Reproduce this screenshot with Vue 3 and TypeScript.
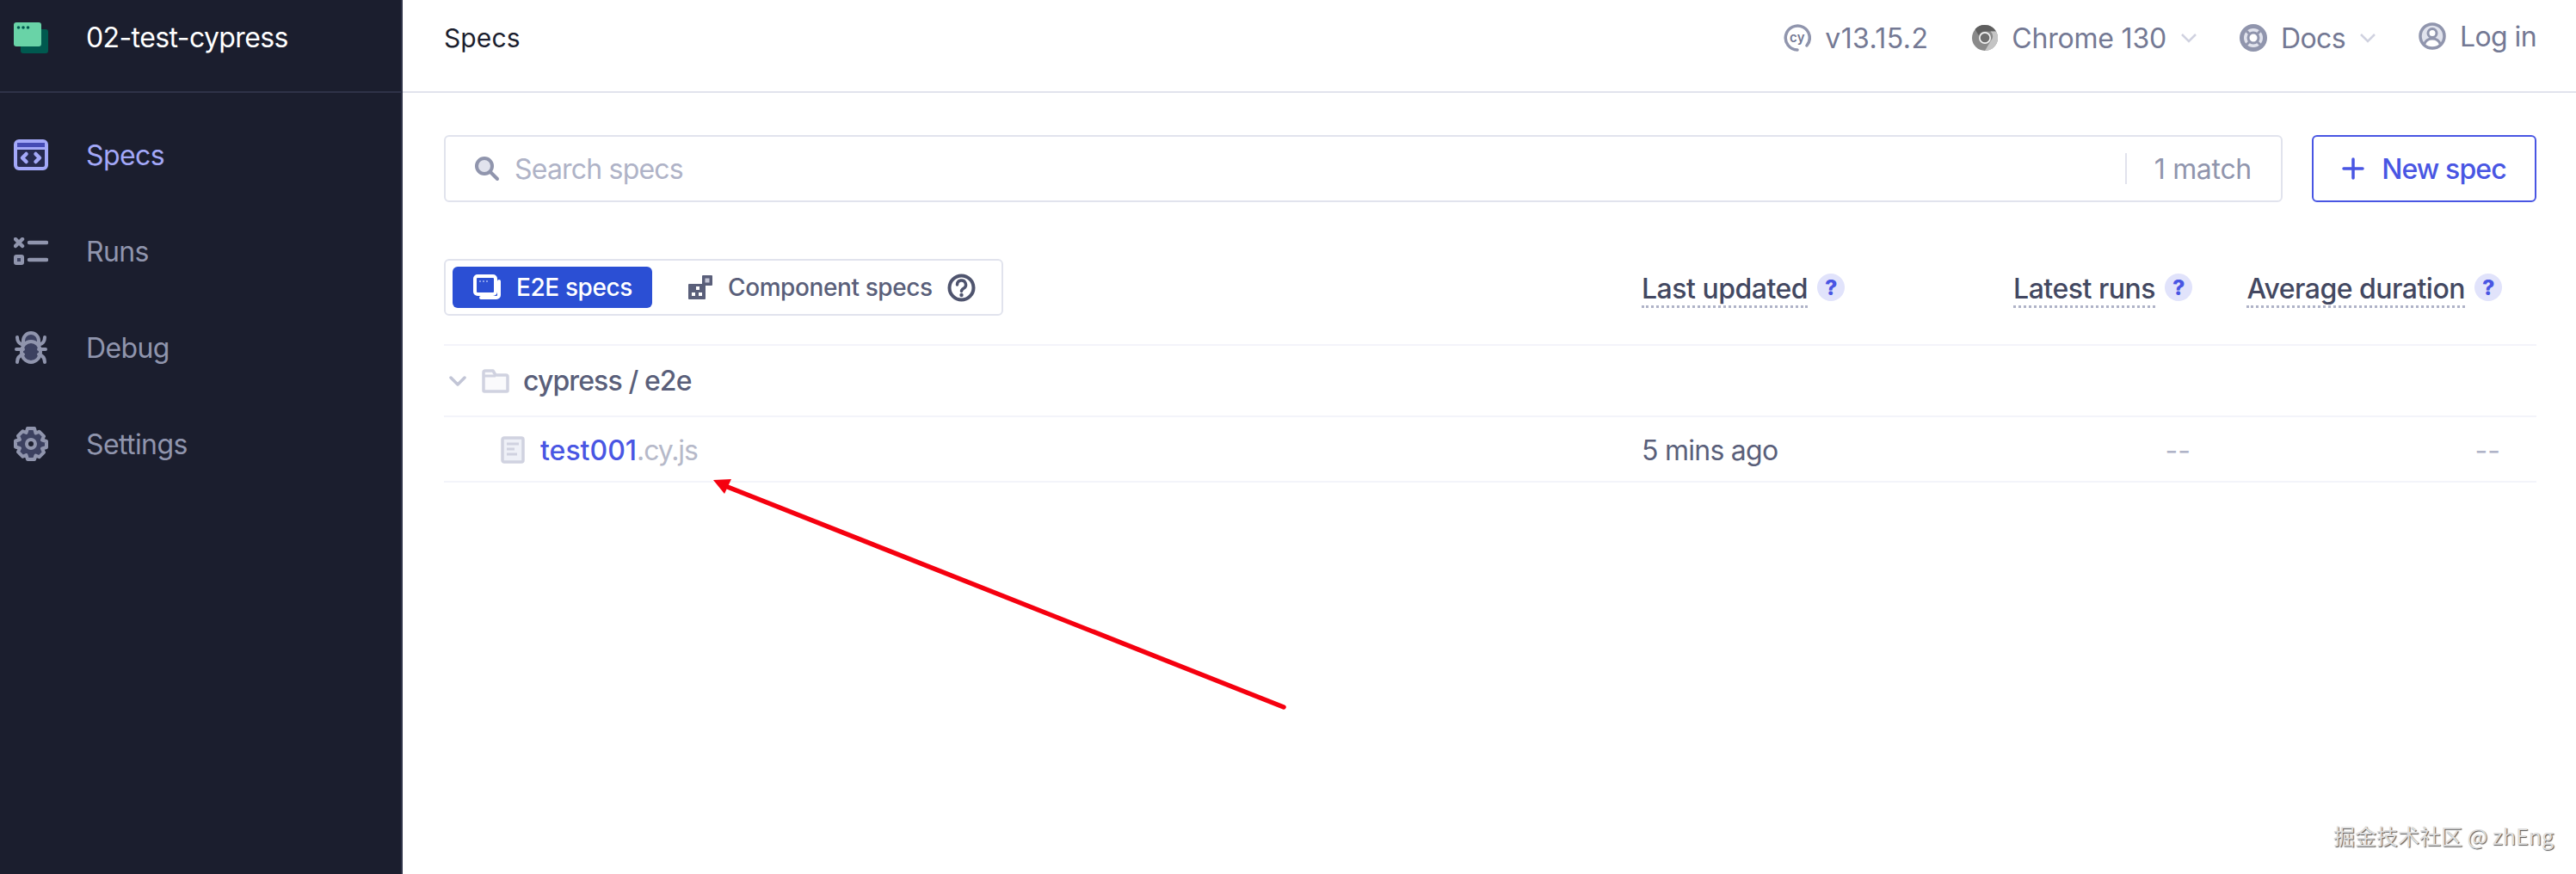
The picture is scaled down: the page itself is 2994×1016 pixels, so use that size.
<script setup lang="ts">
const navItems: { id: string; label: string; active?: boolean }[] = [
  { id: 'specs', label: 'Specs', active: true },
  { id: 'runs', label: 'Runs' },
  { id: 'debug', label: 'Debug' },
  { id: 'settings', label: 'Settings' },
]
</script>

<template>
  <div class="app">
    <aside class="sidebar">
      <div class="brand">
        <svg class="nav-icon" width="40" height="36" viewBox="0 0 40 36">
          <rect x="8" y="8" width="32" height="28" rx="3" fill="#00594f" />
          <rect x="0" y="0" width="32" height="28" rx="3" fill="#69d3a7" />
          <circle cx="5.5" cy="6" r="1.8" fill="#00594f" />
          <circle cx="11" cy="6" r="1.8" fill="#00594f" />
          <circle cx="16.5" cy="6" r="1.8" fill="#00594f" />
        </svg>
        <span class="brand-name">02-test-cypress</span>
      </div>
      <nav class="nav">
        <div v-for="item in navItems" :key="item.id" class="nav-item" :class="{ active: item.active }">
          <svg v-if="item.id === 'specs'" class="nav-icon" width="40" height="36" viewBox="0 0 40 36">
            <rect x="2" y="2" width="36" height="32" rx="4" fill="#262a4f" stroke="#a3a8f8" stroke-width="4" />
            <rect x="4" y="4" width="32" height="5" fill="#454bb5" />
            <path d="M2 10.500h36" stroke="#a3a8f8" stroke-width="3" />
            <path d="M14.500 17l-4.500 4.500 4.500 4.500M25.500 17l4.500 4.500-4.500 4.500" fill="none" stroke="#a3a8f8" stroke-width="4.500" stroke-linecap="round" stroke-linejoin="round" />
          </svg>
          <svg v-else-if="item.id === 'runs'" class="nav-icon" width="40" height="32" viewBox="0 0 40 32">
            <path d="M2 2l8 8M10 2l-8 8" stroke="#9095ad" stroke-width="4.500" stroke-linecap="round" />
            <rect x="2" y="22" width="8" height="8" rx="1" fill="#3c4160" stroke="#9095ad" stroke-width="4" />
            <path d="M18 6h20M18 26h20" stroke="#9095ad" stroke-width="4.500" stroke-linecap="round" />
          </svg>
          <svg v-else-if="item.id === 'debug'" class="nav-icon" width="40" height="38" viewBox="0 0 40 38">
            <path d="M20 2a9 9 0 0 0-9 9v4h18v-4a9 9 0 0 0-9-9z" fill="#3c4160" stroke="#9095ad" stroke-width="4" />
            <ellipse cx="20" cy="24" rx="11" ry="12" fill="#3c4160" stroke="#9095ad" stroke-width="4" />
            <path d="M4 7c0 5 3 8 7 9M36 7c0 5-3 8-7 9M3 21h8M37 21h-8M4 36c0-5 3-8 7-9M36 36c0-5-3-8-7-9" fill="none" stroke="#9095ad" stroke-width="4" stroke-linecap="round" />
          </svg>
          <svg v-else class="nav-icon" width="40" height="40" viewBox="0 0 40 40">
            <path d="M16 2h8l1.500 5.500 4-1.800 5.500 5.500-2 4.300 5 1.500v7l-5 1.500 2 4.300-5.500 5.500-4-1.800L24 38h-8l-1.500-5-4 1.800L5 29.300l2-4.300-5-1.500v-7l5-1.500-2-4.300L10.500 5.200l4 1.800z" fill="#3c4160" stroke="#9095ad" stroke-width="4" stroke-linejoin="round" />
            <circle cx="20" cy="20" r="5" fill="#1b1e2e" stroke="#9095ad" stroke-width="4" />
          </svg>
          <span>{{ item.label }}</span>
        </div>
      </nav>
    </aside>

    <main class="main">
      <header class="topbar">
        <span class="title">Specs</span>
        <div class="top-links">
          <div class="top-link version">
            <svg width="32" height="32" viewBox="0 0 32 32">
              <path d="M27 25A14 14 0 1 0 16 30" fill="none" stroke="#9095ad" stroke-width="3.500" stroke-linecap="round" />
              <text x="16" y="20.500" text-anchor="middle" font-family="Inter" font-size="15" font-weight="600" fill="#747994">cy</text>
            </svg>
            <span>v13.15.2</span>
          </div>
          <div class="top-link chrome">
            <svg width="30" height="30" viewBox="0 0 30 30">
              <circle cx="15" cy="15" r="15" fill="#8a8a8a" />
              <path d="M15 0a15 15 0 0 1 13 7.500H15a7.500 7.500 0 0 0-7 5L3.500 5A15 15 0 0 1 15 0z" fill="#5f5f5f" />
              <path d="M28 7.500A15 15 0 0 1 15 30l6.500-11a7.500 7.500 0 0 0 0-11.500z" fill="#c4c4c4" />
              <circle cx="15" cy="15" r="7" fill="#f4f4f4" />
              <circle cx="15" cy="15" r="5.300" fill="#6f6f6f" />
            </svg>
            <span>Chrome 130</span>
            <svg class="chev" width="20" height="12" viewBox="0 0 20 12"><path d="M2 2l8 8 8-8" fill="none" stroke="#d0d2e0" stroke-width="2.500" /></svg>
          </div>
          <div class="top-link docs">
            <svg width="32" height="32" viewBox="0 0 32 32">
              <circle cx="16" cy="16" r="16" fill="#9095ad" />
              <circle cx="16" cy="16" r="11" fill="#e1e3ed" />
              <path d="M8 8l16 16M24 8L8 24" stroke="#9095ad" stroke-width="3" />
              <circle cx="16" cy="16" r="6" fill="#fff" stroke="#9095ad" stroke-width="3" />
            </svg>
            <span>Docs</span>
            <svg class="chev" width="20" height="12" viewBox="0 0 20 12"><path d="M2 2l8 8 8-8" fill="none" stroke="#d0d2e0" stroke-width="2.500" /></svg>
          </div>
          <div class="top-link login">
            <svg width="32" height="32" viewBox="0 0 32 32">
              <circle cx="16" cy="16" r="14" fill="#e1e3ed" stroke="#9095ad" stroke-width="3.500" />
              <circle cx="16" cy="12.500" r="5" fill="#fff" stroke="#9095ad" stroke-width="3" />
              <path d="M6.500 26c1.500-5 5-7 9.500-7s8 2 9.500 7a14 14 0 0 1-19 0z" fill="#fff" stroke="#9095ad" stroke-width="3" />
            </svg>
            <span>Log in</span>
          </div>
        </div>
      </header>

      <section class="content">
        <div class="search-row">
          <div class="search">
            <svg width="30" height="30" viewBox="0 0 30 30">
              <circle cx="12" cy="12" r="9" fill="#e1e3ed" stroke="#9095ad" stroke-width="4" />
              <path d="M19 19l8 8" stroke="#9095ad" stroke-width="4" stroke-linecap="round" />
            </svg>
            <span class="placeholder">Search specs</span>
            <span class="match">1 match</span>
          </div>
          <div class="new-spec">
            <svg width="26" height="26" viewBox="0 0 26 26"><path d="M13 2v22M2 13h22" stroke="#4956e3" stroke-width="3.500" stroke-linecap="round" /></svg>
            <span>New spec</span>
          </div>
        </div>

        <div class="table-row head">
          <div class="toggle">
            <div class="tab on">
              <svg width="32" height="30" viewBox="0 0 32 30">
                <path d="M9 27h18a3 3 0 0 0 3-3V8" fill="none" stroke="#fff" stroke-width="4" stroke-linecap="round" />
                <rect x="2" y="2" width="24" height="21" rx="3" fill="#2b4fd4" stroke="#fff" stroke-width="4" />
                <circle cx="8" cy="8" r="1" fill="#a9b8f2" /><circle cx="12" cy="8" r="1" fill="#a9b8f2" /><circle cx="16" cy="8" r="1" fill="#a9b8f2" />
              </svg>
              <span>E2E specs</span>
            </div>
            <div class="tab">
              <svg width="28" height="28" viewBox="0 0 28 28">
                <rect x="0" y="10" width="20" height="18" rx="1" fill="#5a5f7a" />
                <rect x="16" y="0" width="12" height="12" rx="1" fill="#5a5f7a" />
                <rect x="19.500" y="3.500" width="5" height="5" fill="#c6c8d8" />
                <rect x="9" y="13" width="4" height="4" fill="#fff" />
                <rect x="4" y="20" width="4" height="4" fill="#fff" /><rect x="12" y="20" width="4" height="4" fill="#fff" />
              </svg>
              <span>Component specs</span>
              <svg class="help" width="33" height="33" viewBox="0 0 33 33">
                <circle cx="16.500" cy="16.500" r="14" fill="none" stroke="#4f546e" stroke-width="4" />
                <path d="M11.500 13a5 5 0 1 1 7.500 4.300c-1.600.9-2.500 1.700-2.500 3.200" fill="none" stroke="#4f546e" stroke-width="3.500" stroke-linecap="round" />
                <circle cx="16.500" cy="25" r="2.200" fill="#4f546e" />
              </svg>
            </div>
          </div>
          <div class="col-head"><span class="dotted">Last updated</span><span class="q">?</span></div>
          <div class="col-head end"><span class="dotted">Latest runs</span><span class="q">?</span></div>
          <div class="col-head end"><span class="dotted">Average duration</span><span class="q">?</span></div>
        </div>

        <div class="folder-row">
          <svg width="20" height="12" viewBox="0 0 20 12"><path d="M2 2l8 8 8-8" fill="none" stroke="#c2c5d6" stroke-width="3.500" stroke-linecap="round" stroke-linejoin="round" /></svg>
          <svg width="32" height="28" viewBox="0 0 32 28">
            <path d="M2 25V4a2 2 0 0 1 2-2h9l3 5h12a2 2 0 0 1 2 2v16a1 1 0 0 1-1 1H3a1 1 0 0 1-1-1z" fill="#fafafc" stroke="#d0d2e0" stroke-width="3.500" stroke-linejoin="round" />
            <path d="M2 8h14" stroke="#d0d2e0" stroke-width="3" />
          </svg>
          <span>cypress / e2e</span>
        </div>

        <div class="table-row file">
          <div class="file-name">
            <svg width="28" height="32" viewBox="0 0 28 32">
              <rect x="2" y="2" width="24" height="28" rx="2" fill="#eef0f7" stroke="#d0d2e0" stroke-width="3.500" />
              <path d="M7 9h14M7 15h9M7 21h12" stroke="#d0d2e0" stroke-width="3" />
            </svg>
            <span class="fname">test001<span class="ext">.cy.js</span></span>
          </div>
          <div class="updated">5 mins ago</div>
          <div class="dash">--</div>
          <div class="dash">--</div>
        </div>
      </section>

      <svg class="arrow" width="2994" height="1016" viewBox="0 0 2994 1016">
        <path d="M1492 822L838 563" stroke="#f5000f" stroke-width="5.500" stroke-linecap="round" />
        <path d="M829 558l21-1-8 17z" fill="#f5000f" />
      </svg>
      <div class="watermark">掘金技术社区 @ zhEng</div>
    </main>
  </div>
</template>

<style>
html, body { margin: 0; background: #fff; }
</style>

<style scoped>
.app {
  display: flex;
  width: 2994px;
  height: 1016px;
  overflow: hidden;
  font-family: Inter, "Noto Sans CJK SC", sans-serif;
  font-size: 32px;
  background: #fff;
}
.sidebar {
  flex: none;
  box-sizing: border-box;
  width: 468px;
  background: #1b1e2e;
  border-right: 2px solid #2e3247;
  letter-spacing: -0.6px;
}
.brand {
  display: flex;
  align-items: center;
  gap: 44px;
  box-sizing: border-box;
  height: 108px;
  padding-left: 16px;
  padding-bottom: 19px;
  border-bottom: 2px solid #2e3247;
  color: #fff;
}
.nav { padding-top: 16px; }
.nav-item {
  display: flex;
  align-items: center;
  gap: 44px;
  height: 112px;
  padding-left: 16px;
  color: #9095ad;
}
.nav-item.active { color: #a3a8f8; }
.nav-icon { flex: none; }
.main {
  position: relative;
  flex: 1;
  min-width: 0;
}
.topbar {
  display: flex;
  align-items: flex-start;
  justify-content: space-between;
  box-sizing: border-box;
  height: 108px;
  padding: 26px 46px 0 48px;
  border-bottom: 2px solid #e1e3ed;
}
.title { color: #1b1e2e; font-size: 30px; line-height: 36px; letter-spacing: 0.1px; }
.top-links {
  display: flex;
  align-items: center;
  height: 36px;
  color: #747994;
  letter-spacing: -0.6px;
}
.top-link { display: flex; align-items: center; gap: 16px; }
.version { margin-right: 51px; letter-spacing: 0.4px; }
.chrome { margin-right: 49px; letter-spacing: -0.2px; }
.docs { margin-right: 49px; }
.login { position: relative; top: -2px; }
.content { padding: 49px 46px 0 48px; }
.search-row { display: flex; gap: 34px; height: 78px; }
.search {
  flex: 1;
  display: flex;
  align-items: center;
  box-sizing: border-box;
  padding: 0 34px 0 33px;
  border: 2px solid #e1e3ed;
  border-radius: 6px;
  gap: 17px;
}
.placeholder { flex: 1; color: #afb3c7; letter-spacing: -0.8px; }
.match {
  display: flex;
  align-items: center;
  height: 36px;
  padding-left: 32px;
  border-left: 2px solid #e1e3ed;
  color: #9095ad;
  letter-spacing: -0.3px;
}
.new-spec {
  display: flex;
  align-items: center;
  justify-content: center;
  gap: 20px;
  box-sizing: border-box;
  width: 261px;
  border: 2px solid #4956e3;
  border-radius: 6px;
  color: #4956e3;
  font-weight: 500;
  letter-spacing: -0.9px;
}
.table-row {
  display: grid;
  grid-template-columns: 1392px 400px 240px 360px;
  align-items: center;
}
.head {
  margin-top: 66px;
  padding-bottom: 33px;
  border-bottom: 2px solid #f3f4fa;
}
.toggle {
  display: flex;
  align-items: center;
  box-sizing: border-box;
  width: 650px;
  height: 66px;
  padding: 0 8px;
  border: 2px solid #e1e3ed;
  border-radius: 6px;
  font-size: 28px;
  font-weight: 500;
  color: #5a5f7a;
  letter-spacing: -0.4px;
}
.tab { display: flex; align-items: center; gap: 18px; height: 48px; }
.tab.on {
  width: 232px;
  box-sizing: border-box;
  padding-left: 24px;
  background: #2b4fd4;
  border-radius: 6px;
  color: #fff;
}
.tab:not(.on) { margin-left: 42px; }
.help { margin-left: -1px; }
.col-head {
  display: flex;
  align-items: center;
  gap: 11px;
  font-weight: 500;
  color: #434861;
  letter-spacing: -0.5px;
}
.end { justify-content: flex-end; }
.dotted {
  margin-top: 6px;
  line-height: 38px;
  border-bottom: 3px dotted #afb3c7;
}
.q {
  display: flex;
  align-items: center;
  justify-content: center;
  width: 32px;
  height: 32px;
  border-radius: 50%;
  background: #e1e3fb;
  color: #4956e3;
  font-size: 25px;
  font-weight: 800;
}
.folder-row {
  display: flex;
  align-items: center;
  box-sizing: border-box;
  height: 83px;
  padding-left: 6px;
  border-bottom: 2px solid #f3f4fa;
  color: #5a5f7a;
  font-weight: 500;
  letter-spacing: -0.9px;
}
.folder-row svg:nth-child(2) { margin-left: 18px; margin-right: 16px; }
.file {
  height: 76px;
  box-sizing: border-box;
  padding-top: 2px;
  border-bottom: 2px solid #f3f4fa;
}
.file-name { display: flex; align-items: center; gap: 18px; padding-left: 66px; }
.fname { color: #4956e3; font-weight: 500; }
.ext { color: #b6b9c9; font-weight: 400; letter-spacing: -1.1px; }
.updated { color: #5a5f7a; letter-spacing: -0.75px; }
.dash { text-align: right; color: #afb3c7; padding-right: 2px; }
.arrow {
  position: absolute;
  left: -468px;
  top: 0;
  pointer-events: none;
}
.watermark {
  position: absolute;
  right: 26px;
  top: 953px;
  font-family: "Noto Sans CJK SC", sans-serif;
  font-size: 25px;
  color: #dedede;
  text-shadow: 1px 1px 1px #555;
  white-space: nowrap;
}
</style>
